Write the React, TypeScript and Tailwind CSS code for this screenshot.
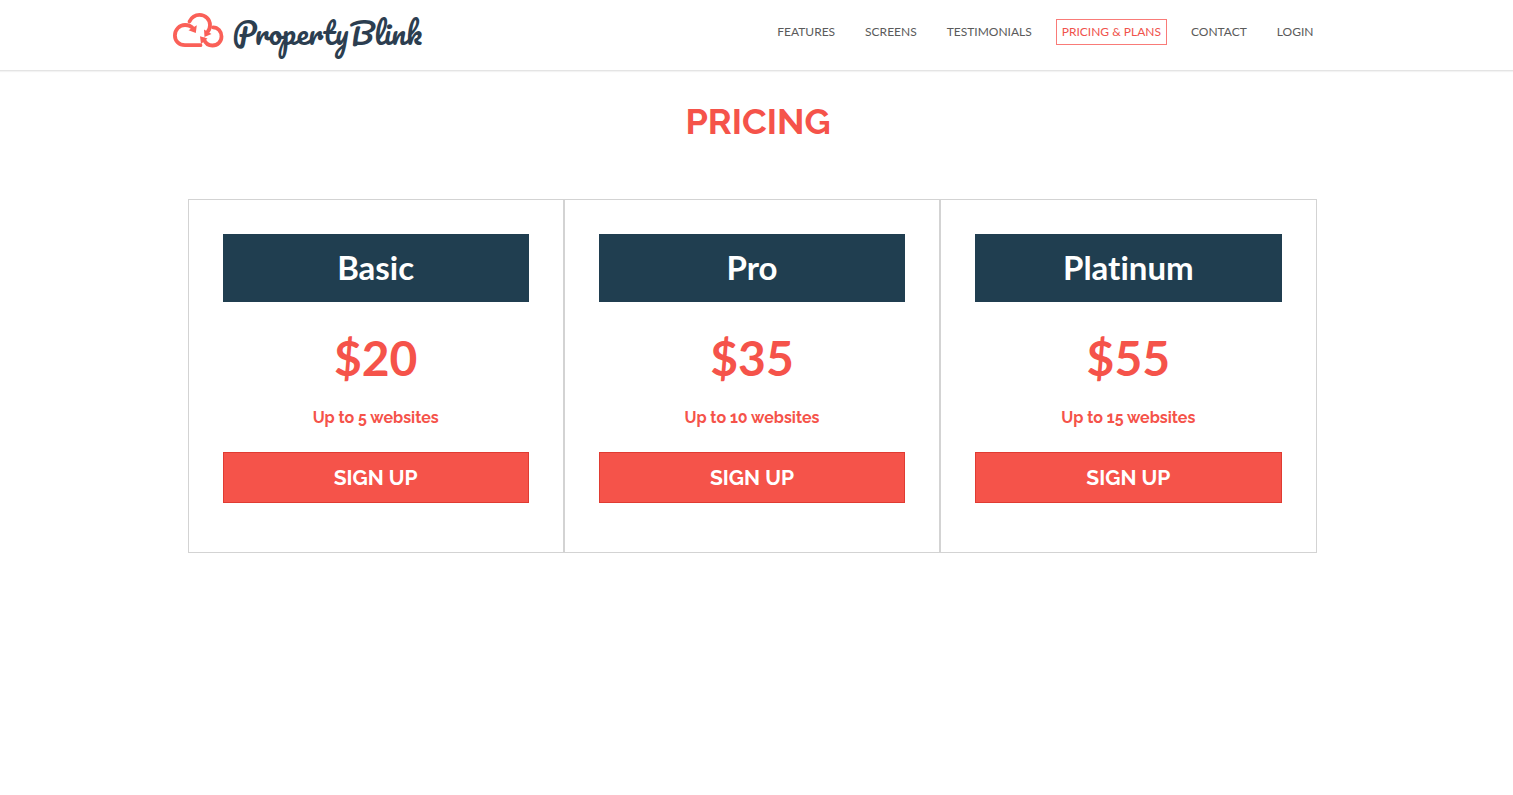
const links = ['FEATURES', 'SCREENS', 'TESTIMONIALS', 'PRICING & PLANS', 'CONTACT', 'LOGIN'];

const plans = [
  { name: 'Basic', price: '$20', limit: 'Up to 5 websites' },
  { name: 'Pro', price: '$35', limit: 'Up to 10 websites' },
  { name: 'Platinum', price: '$55', limit: 'Up to 15 websites' },
];

function CloudLogo() {
  return (
    <svg viewBox="0 0 52 36" className="h-9 w-[52px] shrink-0" fill="none" stroke="#fa6058" strokeWidth="3.8" aria-hidden="true">
      <path d="M27.500 32.200H12C6 32.200 1.900 28 1.900 22.500C1.900 16.500 6.500 12 12 12C15.500 12 18.500 13.200 20.500 16" strokeLinecap="round" />
      <path d="M16.500 8.500C18.500 4.500 22 1.900 26.500 1.900C32.500 1.900 37 6.500 37 12C37 14.500 36.300 17 34.500 19" strokeLinecap="round" />
      <path d="M40 14.300C45 14.300 48.500 18.500 48.500 23.500C48.500 28.500 44.800 32.500 39.500 32.500C35 32.500 32.500 30.500 31 26.500" strokeLinecap="round" />
      <path d="M23.800 12.200L22.800 20L15.500 17.200ZM31 16.500L31.500 24L38.500 21ZM27 23.200L34.500 25.500L28 31Z" fill="#fa6058" stroke="none" />
    </svg>
  );
}

export default function App() {
  return (
    <div className="font-[Lato,sans-serif] text-[#f5534a]">
      <header className="border-b border-[#e4e4e4] bg-white shadow-[0_1px_1px_#f3f3f3]">
        <div className="mx-auto flex min-h-[70px] max-w-[1170px] flex-wrap items-start justify-between pr-[22px]">
          <a href="#home" aria-label="Property Blink" className="flex items-start gap-2 pt-[13px] pl-px">
            <CloudLogo />
            <span className="flex gap-px font-[Pacifico,Lato,cursive] text-[30px] leading-10 whitespace-nowrap text-[#2c3e50]">
              <span>Property</span> <span>Blink</span>
            </span>
          </a>
          <nav aria-label="Main" className="flex flex-wrap gap-[18px] pt-[19px] text-xs">
            {links.map((label) => (
              <a
                key={label}
                href="#"
                aria-current={label === 'PRICING & PLANS' ? 'page' : undefined}
                className="border border-transparent px-[5px] leading-6 text-[#5a5a5a] aria-[current=page]:border-[#f97b78] aria-[current=page]:text-[#f0524c]"
              >
                {label}
              </a>
            ))}
          </nav>
        </div>
      </header>

      <main className="mx-auto max-w-[1170px] pr-[25px] pl-4">
        <h1 className="pt-[30px] pl-3 text-center font-[Raleway,Lato,sans-serif] text-4xl leading-10 font-bold">PRICING</h1>
        <div className="mt-[58px] grid grid-cols-1 md:grid-cols-3">
          {plans.map((plan) => (
            <section key={plan.name} className="border border-[#d3d3d3] px-[34px] pt-[34px] pb-[49px] text-center">
              <h2 className="bg-[#203e50] pb-[2px] text-[33px] leading-[66px] font-bold text-white [font-variant-ligatures:none]">{plan.name}</h2>
              <p className="mt-7 text-5xl leading-[56px] font-bold">{plan.price}</p>
              <p className="mt-5 font-[Raleway,Lato,sans-serif] text-base leading-6 font-bold">{plan.limit}</p>
              <button type="button" className="mt-[22px] h-[51px] w-full border border-[#e03b32] bg-[#f5534a] font-[Raleway,Lato,sans-serif] text-[21px] font-bold text-white">
                SIGN UP
              </button>
            </section>
          ))}
        </div>
      </main>
    </div>
  );
}
